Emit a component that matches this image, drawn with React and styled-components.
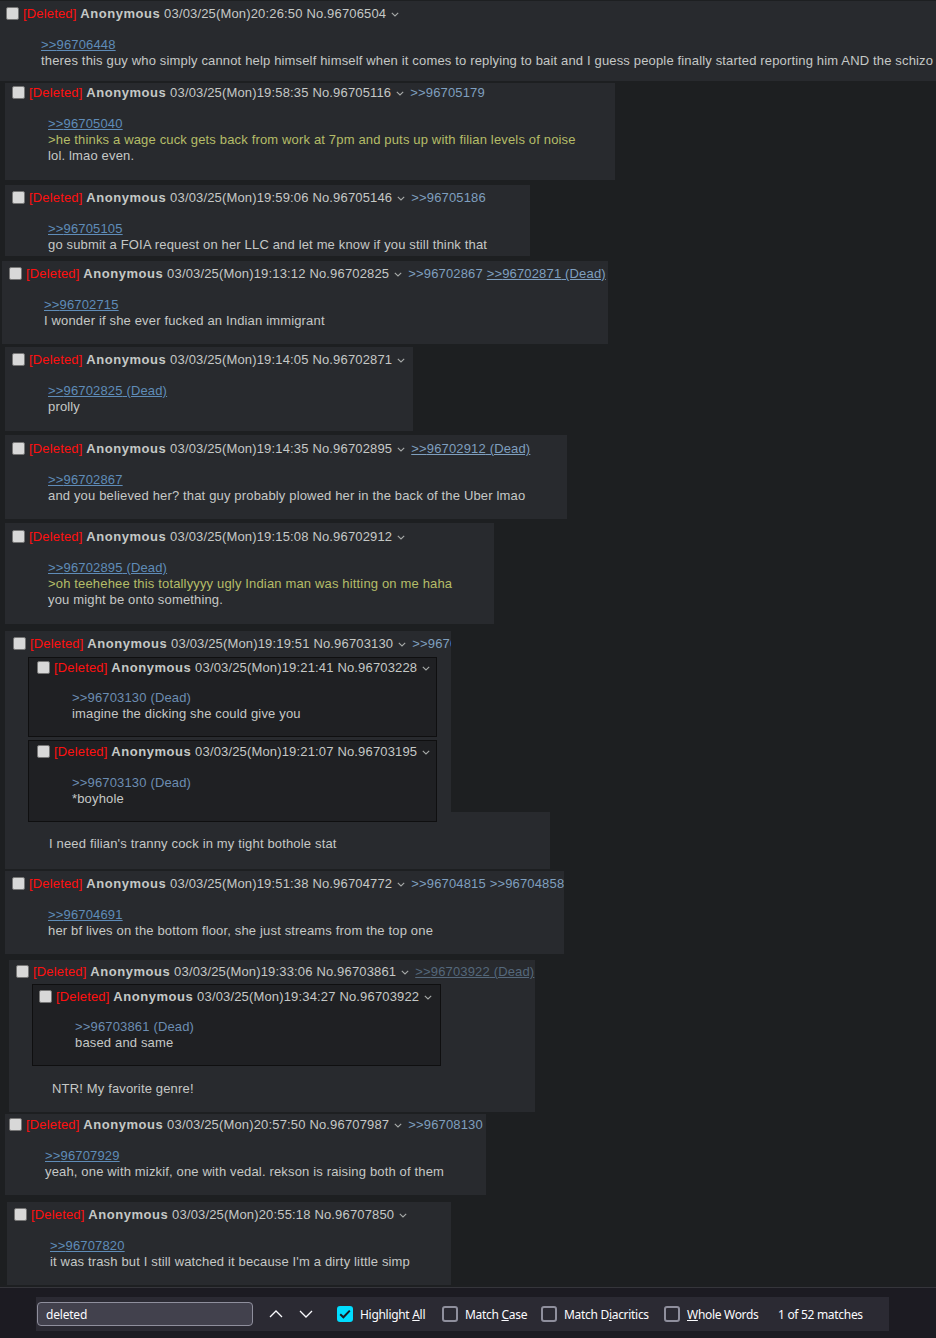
import React from "react";
import styled, { createGlobalStyle } from "styled-components";

const GlobalStyle = createGlobalStyle`
  html, body { margin: 0; padding: 0; background: #1d1f21; }
  body {
    font-family: "Liberation Sans", Arial, sans-serif;
    font-size: 13px;
    color: #c5c8c6;
  }
`;

const Page = styled.div`
  width: 936px;
  min-height: 1338px;
  display: flex;
  flex-direction: column;
  align-items: flex-start;
  overflow: hidden;
  letter-spacing: 0.16px;
`;

const PostBox = styled.div`
  box-sizing: border-box;
  background: #282a2e;
  width: ${(p) => p.$w}px;
  margin: ${(p) => p.$mt}px 0 0 ${(p) => p.$left}px;
  padding: ${(p) => p.$pt}px 0 ${(p) => p.$pb}px ${(p) => p.$pl}px;
  line-height: 16px;
`;

const Tail = styled.div`
  box-sizing: border-box;
  background: #282a2e;
  width: ${(p) => p.$w}px;
  margin: ${(p) => p.$mt}px 0 0 ${(p) => p.$left}px;
  padding: ${(p) => p.$pt}px 0 ${(p) => p.$pb}px ${(p) => p.$pl}px;
  line-height: 16px;
  white-space: nowrap;
`;

const Nested = styled.div`
  position: relative;
  z-index: 1;
  box-sizing: border-box;
  width: ${(p) => p.$w}px;
  margin: ${(p) => p.$mt}px 0 0 ${(p) => p.$ml}px;
  padding: ${(p) => p.$pt}px 0 ${(p) => p.$pb}px ${(p) => p.$pl}px;
  background: #1f2023;
  border: 1px solid #0f0f10;
`;

const Info = styled.div`
  height: 16px;
  white-space: nowrap;
  overflow: hidden;
`;

const CheckBox = styled.span`
  display: inline-block;
  box-sizing: border-box;
  width: 13px;
  height: 13px;
  vertical-align: -2px;
  margin-right: 4px;
  background: #d8d8d8;
  border: 1px solid #767676;
  border-radius: 2px;
`;

const Deleted = styled.span`
  color: #ff1010;
`;

const Name = styled.span`
  font-weight: bold;
  color: #c5c8c6;
  letter-spacing: 0.55px;
`;

const MenuIcon = styled.svg`
  display: inline-block;
  vertical-align: 1px;
  margin: 0 6px 0 5px;
`;

const BackLink = styled.a`
  color: ${(p) => (p.$dim ? "#55687b" : "#7f9fbf")};
  text-decoration: ${(p) => (p.$u ? "underline" : "none")};
  cursor: pointer;
`;

const Message = styled.div`
  margin: ${(p) => p.$gap}px 0 0 ${(p) => p.$indent}px;
  white-space: nowrap;
`;

const Line = styled.div`
  height: 16px;
`;

const QuoteLink = styled.a`
  color: ${(p) => (p.$plain ? "#6c8db2" : "#5f8cb8")};
  text-decoration: ${(p) => (p.$plain ? "none" : "underline")};
  cursor: pointer;
`;

const Green = styled.span`
  color: #b5bd68;
`;

const Footer = styled.div`
  align-self: stretch;
  margin-top: 2px;
  border-top: 1px solid #35353b;
  background: #1c1b22;
  padding: 9px 0 7px 36px;
`;

const FindBar = styled.div`
  width: 853px;
  height: 34px;
  box-sizing: border-box;
  background: #2b2a33;
  display: flex;
  align-items: center;
  font-family: "Noto Sans", sans-serif;
  font-size: 12px;
  letter-spacing: -0.3px;
  color: #fbfbfe;
`;

const FindInput = styled.input`
  box-sizing: border-box;
  width: 216px;
  height: 24px;
  margin-left: 1px;
  padding: 0 0 0 8px;
  background: #42414d;
  border: 1px solid #8f8f9d;
  border-radius: 4px;
  color: #fbfbfe;
  font-family: "Noto Sans", sans-serif;
  font-size: 12px;
  letter-spacing: -0.2px;
  outline: none;
`;

const NavButton = styled.div`
  width: 30px;
  height: 24px;
  display: flex;
  align-items: center;
  justify-content: center;
  margin-left: ${(p) => p.$ml}px;
`;

const Option = styled.div`
  width: ${(p) => p.$w}px;
  flex: none;
  display: flex;
  align-items: center;
  gap: 7px;
  margin-left: ${(p) => p.$ml || 0}px;
  white-space: nowrap;
`;

const Box = styled.span`
  box-sizing: border-box;
  width: 16px;
  height: 16px;
  flex: none;
  border-radius: 3px;
  display: flex;
  align-items: center;
  justify-content: center;
  background: ${(p) => (p.$on ? "#00ddff" : "transparent")};
  border: ${(p) => (p.$on ? "none" : "2px solid #8f8f9d")};
`;

const Status = styled.span`
  white-space: nowrap;
`;

const Chevron = () => (
  <MenuIcon width="8" height="5" viewBox="0 0 8 5">
    <path d="M0.8 0.8 L4 4 L7.2 0.8" fill="none" stroke="#a7aaa9" strokeWidth="1.1" />
  </MenuIcon>
);

function PostHeader({ time, no, links = [] }) {
  return (
    <Info>
      <CheckBox />
      <Deleted>[Deleted]</Deleted> <Name>Anonymous</Name> 03/03/25(Mon){time} No.{no}
      <Chevron />
      {links.map((l, i) => (
        <React.Fragment key={i}>
          {i > 0 && " "}
          <BackLink $u={l.u} $dim={l.dim}>
            &gt;&gt;{l.id}
            {l.dead ? " (Dead)" : ""}
          </BackLink>
        </React.Fragment>
      ))}
    </Info>
  );
}

function Lines({ lines }) {
  return lines.map((ln, i) => {
    if (ln.t === "link")
      return (
        <Line key={i}>
          <QuoteLink $plain={ln.plain}>
            &gt;&gt;{ln.id}
            {ln.dead ? " (Dead)" : ""}
          </QuoteLink>
        </Line>
      );
    if (ln.t === "green")
      return (
        <Line key={i}>
          <Green>{ln.text}</Green>
        </Line>
      );
    return <Line key={i}>{ln.text}</Line>;
  });
}

function Post({ p }) {
  return (
    <PostBox $left={p.left} $w={p.w} $mt={p.mt} $pt={p.pt} $pb={p.pb} $pl={p.pl}>
      <PostHeader time={p.time} no={p.no} links={p.links} />
      <Message $gap={15} $indent={p.indent}>
        <Lines lines={p.lines} />
      </Message>
    </PostBox>
  );
}

const before = [
  {
    left: 0, w: 936, mt: 1, pt: 5, pb: 12, pl: 6, indent: 35,
    time: "20:26:50", no: "96706504", links: [],
    lines: [
      { t: "link", id: "96706448" },
      { t: "text", text: "theres this guy who simply cannot help himself himself when it comes to replying to bait and I guess people finally started reporting him AND the schizo" },
    ],
  },
  {
    left: 5, w: 610, mt: 2, pt: 2, pb: 16, pl: 7, indent: 36,
    time: "19:58:35", no: "96705116", links: [{ id: "96705179" }],
    lines: [
      { t: "link", id: "96705040" },
      { t: "green", text: ">he thinks a wage cuck gets back from work at 7pm and puts up with filian levels of noise" },
      { t: "text", text: "lol. lmao even." },
    ],
  },
  {
    left: 5, w: 525, mt: 5, pt: 5, pb: 3, pl: 7, indent: 36,
    time: "19:59:06", no: "96705146", links: [{ id: "96705186" }],
    lines: [
      { t: "link", id: "96705105" },
      { t: "text", text: "go submit a FOIA request on her LLC and let me know if you still think that" },
    ],
  },
  {
    left: 2, w: 606, mt: 5, pt: 5, pb: 15, pl: 7, indent: 35,
    time: "19:13:12", no: "96702825", links: [{ id: "96702867" }, { id: "96702871", dead: true, u: true }],
    lines: [
      { t: "link", id: "96702715" },
      { t: "text", text: "I wonder if she ever fucked an Indian immigrant" },
    ],
  },
  {
    left: 5, w: 408, mt: 3, pt: 5, pb: 16, pl: 7, indent: 36,
    time: "19:14:05", no: "96702871", links: [],
    lines: [
      { t: "link", id: "96702825", dead: true },
      { t: "text", text: "prolly" },
    ],
  },
  {
    left: 5, w: 562, mt: 4, pt: 6, pb: 15, pl: 7, indent: 36,
    time: "19:14:35", no: "96702895", links: [{ id: "96702912", dead: true, u: true }],
    lines: [
      { t: "link", id: "96702867" },
      { t: "text", text: "and you believed her? that guy probably plowed her in the back of the Uber lmao" },
    ],
  },
  {
    left: 5, w: 489, mt: 4, pt: 6, pb: 16, pl: 7, indent: 36,
    time: "19:15:08", no: "96702912", links: [],
    lines: [
      { t: "link", id: "96702895", dead: true },
      { t: "green", text: ">oh teehehee this totallyyyy ugly Indian man was hitting on me haha" },
      { t: "text", text: "you might be onto something." },
    ],
  },
];

const post9 = {
  left: 5, w: 559, mt: 2, pt: 5, pb: 15, pl: 7, indent: 36,
  time: "19:51:38", no: "96704772", links: [{ id: "96704815" }, { id: "96704858" }],
  lines: [
    { t: "link", id: "96704691" },
    { t: "text", text: "her bf lives on the bottom floor, she just streams from the top one" },
  ],
};

const after = [
  {
    left: 5, w: 481, mt: 2, pt: 3, pb: 15, pl: 4, indent: 36,
    time: "20:57:50", no: "96707987", links: [{ id: "96708130" }],
    lines: [
      { t: "link", id: "96707929" },
      { t: "text", text: "yeah, one with mizkif, one with vedal. rekson is raising both of them" },
    ],
  },
  {
    left: 7, w: 444, mt: 7, pt: 5, pb: 15, pl: 7, indent: 36,
    time: "20:55:18", no: "96707850", links: [],
    lines: [
      { t: "link", id: "96707820" },
      { t: "text", text: "it was trash but I still watched it because I'm a dirty little simp" },
    ],
  },
];

const UpIcon = () => (
  <svg width="14" height="8" viewBox="0 0 14 8">
    <path d="M1 7 L7 1 L13 7" fill="none" stroke="#fbfbfe" strokeWidth="1.3" />
  </svg>
);
const DownIcon = () => (
  <svg width="14" height="8" viewBox="0 0 14 8">
    <path d="M1 1 L7 7 L13 1" fill="none" stroke="#fbfbfe" strokeWidth="1.3" />
  </svg>
);

export default function App() {
  return (
    <>
      <GlobalStyle />
      <Page>
        {before.map((p, i) => (
          <Post key={i} p={p} />
        ))}

        <PostBox $left={5} $w={446} $mt={7} $pt={5} $pb={0} $pl={8}>
          <PostHeader
            time="19:19:51"
            no="96703130"
            links={[{ id: "96703228" }, { id: "96703195" }]}
          />
          <Nested $w={409} $mt={5} $ml={15} $pt={2} $pb={14} $pl={8}>
            <PostHeader time="19:21:41" no="96703228" />
            <Message $gap={14} $indent={35}>
              <Lines
                lines={[
                  { t: "link", id: "96703130", dead: true, plain: true },
                  { t: "text", text: "imagine the dicking she could give you" },
                ]}
              />
            </Message>
          </Nested>
          <Nested $w={409} $mt={3} $ml={15} $pt={3} $pb={14} $pl={8}>
            <PostHeader time="19:21:07" no="96703195" />
            <Message $gap={15} $indent={35}>
              <Lines
                lines={[
                  { t: "link", id: "96703130", dead: true, plain: true },
                  { t: "text", text: "*boyhole" },
                ]}
              />
            </Message>
          </Nested>
        </PostBox>
        <Tail $left={5} $w={545} $mt={-10} $pt={24} $pb={17} $pl={44}>
          I need filian's tranny cock in my tight bothole stat
        </Tail>

        <Post p={post9} />

        <PostBox $left={9} $w={526} $mt={6} $pt={4} $pb={15} $pl={7}>
          <PostHeader
            time="19:33:06"
            no="96703861"
            links={[{ id: "96703922", dead: true, u: true, dim: true }]}
          />
          <Nested $w={409} $mt={4} $ml={16} $pt={4} $pb={14} $pl={6}>
            <PostHeader time="19:34:27" no="96703922" />
            <Message $gap={14} $indent={36}>
              <Lines
                lines={[
                  { t: "link", id: "96703861", dead: true, plain: true },
                  { t: "text", text: "based and same" },
                ]}
              />
            </Message>
          </Nested>
          <Message $gap={15} $indent={36}>
            <Line>NTR! My favorite genre!</Line>
          </Message>
        </PostBox>

        {after.map((p, i) => (
          <Post key={i} p={p} />
        ))}

        <Footer>
          <FindBar>
            <FindInput readOnly value="deleted" />
            <NavButton $ml={8}>
              <UpIcon />
            </NavButton>
            <NavButton $ml={0}>
              <DownIcon />
            </NavButton>
            <Option $w={105} $ml={16}>
              <Box $on>
                <svg width="12" height="10" viewBox="0 0 12 10">
                  <path d="M1.2 5.2 L4.4 8.3 L10.8 1.6" fill="none" stroke="#1c1b22" strokeWidth="2" />
                </svg>
              </Box>
              <span>
                Highlight <u>A</u>ll
              </span>
            </Option>
            <Option $w={99}>
              <Box />
              <span>
                Match <u>C</u>ase
              </span>
            </Option>
            <Option $w={123}>
              <Box />
              <span>
                Match D<u>i</u>acritics
              </span>
            </Option>
            <Option $w={114}>
              <Box />
              <span>
                <u>W</u>hole Words
              </span>
            </Option>
            <Status>1 of 52 matches</Status>
          </FindBar>
        </Footer>
      </Page>
    </>
  );
}
